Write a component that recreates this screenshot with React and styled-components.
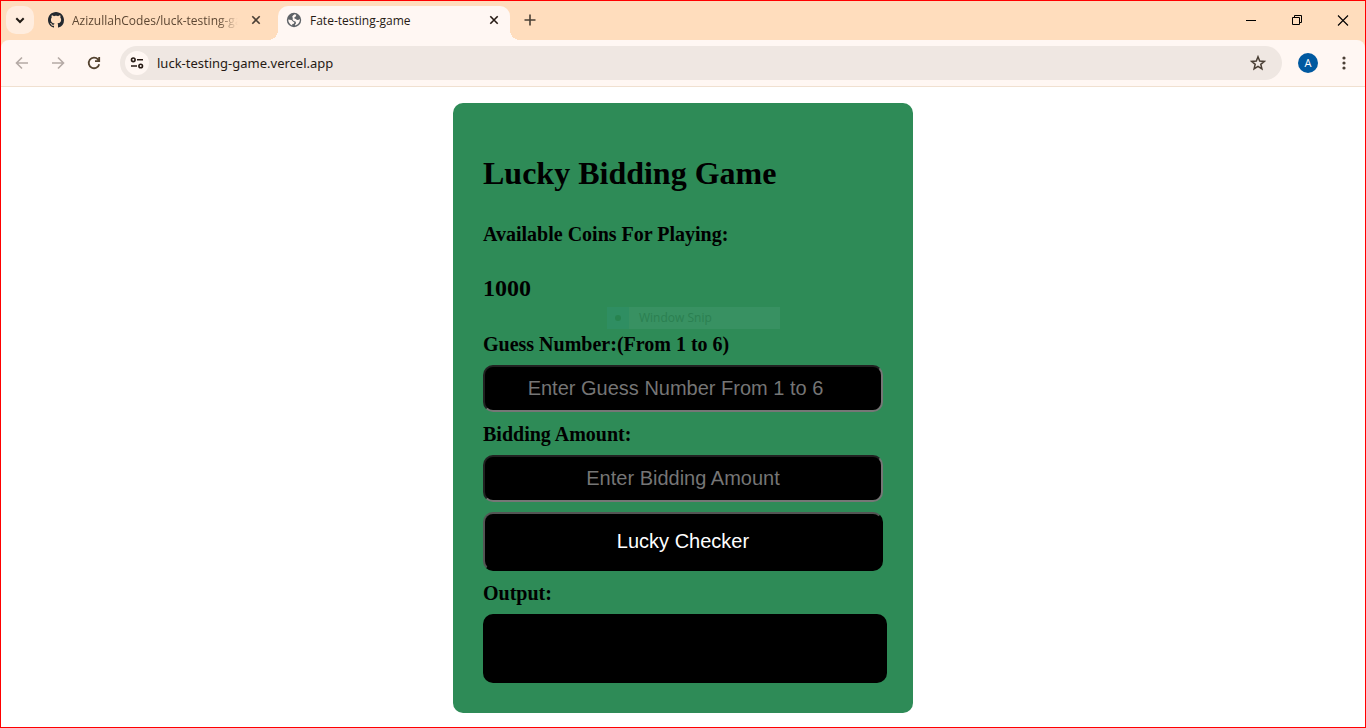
import React from "react";
import styled, { createGlobalStyle } from "styled-components";

const GlobalStyle = createGlobalStyle`
  * { box-sizing: border-box; }
  body { margin: 0; background: #fff; }
  button { font: inherit; color: inherit; cursor: pointer; }
`;

const uiFont = `"Open Sans", "Noto Sans", sans-serif`;

const Window = styled.div`
  min-height: 100vh;
  border: 1px solid #f00;
  background: #fff;
`;

const TabStrip = styled.header`
  display: flex;
  height: 39px;
  padding: 5px 0 0 5px;
  background: #ffddbd;
  font: 12px/16px ${uiFont};
`;

const IconButton = styled.button`
  display: flex;
  align-items: center;
  justify-content: center;
  flex: none;
  width: ${(p) => p.$w || 28}px;
  height: ${(p) => p.$h || 28}px;
  padding: 0;
  border: 0;
  border-radius: ${(p) => p.$radius || 0}px;
  background: ${(p) => p.$bg || "transparent"};
  color: ${(p) => p.$color || "#4a3f35"};
`;

const Tab = styled.div`
  position: relative;
  display: flex;
  align-items: center;
  width: 232px;
  height: 34px;
  padding: 0 6px 6px 8px;
  border-radius: 10px 10px 0 0;
  background: ${(p) => (p.$active ? "#fff7f3" : "transparent")};
  color: ${(p) => (p.$active ? "#261a14" : "#5d4733")};

  &::before,
  &::after {
    content: "";
    display: ${(p) => (p.$active ? "block" : "none")};
    position: absolute;
    bottom: 0;
    width: 10px;
    height: 10px;
  }
  &::before {
    left: -10px;
    background: radial-gradient(circle at 0 0, transparent 10px, #fff7f3 10px);
  }
  &::after {
    right: -10px;
    background: radial-gradient(circle at 100% 0, transparent 10px, #fff7f3 10px);
  }
`;

const InactiveTab = styled(Tab)`
  width: 244px;
  padding-left: 14px;
  padding-right: 12px;
`;

const TabTitle = styled.button`
  flex: 1;
  min-width: 0;
  margin: 0 8px;
  padding: 2px 0 0;
  border: 0;
  background: none;
  text-align: left;
  white-space: nowrap;
  overflow: hidden;
  mask-image: ${(p) =>
    p.$fade ? "linear-gradient(to right, #000 88%, transparent)" : "none"};
`;

const WindowControls = styled.div`
  display: flex;
  margin: -5px 0 0 auto;
`;

const ToolbarBack = styled.div`
  background: #ffddbd;
`;

const Toolbar = styled.nav`
  display: flex;
  align-items: center;
  height: 47px;
  padding: 0 3px;
  border-bottom: 1px solid #f0e0d0;
  border-radius: 8px 8px 0 0;
  background: #fff7f3;
`;

const NavButton = styled(IconButton)`
  width: 36px;
  height: 36px;
`;

const AddressBar = styled.div`
  display: flex;
  flex: 1;
  align-items: center;
  height: 34px;
  margin: 0 8px;
  padding: 0 10px 0 5px;
  border-radius: 17px;
  background: #efe7e2;
`;

const Address = styled.input`
  flex: 1;
  min-width: 0;
  padding: 0;
  margin-left: 8px;
  border: 0;
  outline: 0;
  background: transparent;
  color: #261a14;
  font: 13px/20px "Noto Sans", "Open Sans", sans-serif;
`;

const Avatar = styled.button`
  width: 20px;
  height: 20px;
  margin: 0 8px;
  padding: 0;
  border: 0;
  border-radius: 50%;
  background: #0059a0;
  color: #fff;
  font: 11px/20px ${uiFont};
`;

const Page = styled.main`
  display: flex;
  justify-content: center;
  padding: 16px 16px 14px;
`;

const Card = styled.form`
  position: relative;
  display: flex;
  flex-direction: column;
  gap: 10px;
  width: 460px;
  padding: 31px 30px 30px;
  border-radius: 10px;
  background: #2e8b57;
  color: #000;
  font-family: "Liberation Serif", "Times New Roman", serif;
`;

const Title = styled.h1`
  margin: 21px 0;
  font-size: 32px;
  line-height: 37px;
`;

const Subtitle = styled.h3`
  margin: 0;
  font-size: 20px;
  line-height: 23px;
`;

const Coins = styled.h2`
  margin: 19px 0 20px;
  font-size: 24px;
  line-height: 27px;
`;

const FieldLabel = styled.label`
  margin: 1px 0 -1px;
  font-size: 20px;
  font-weight: bold;
  line-height: 23px;
`;

const Field = styled.input`
  width: 100%;
  height: 47px;
  padding: 10px;
  border: 2px inset #767676;
  border-radius: 10px;
  background: #000;
  color: #fff;
  font: 20px/23px "Liberation Sans", Arial, sans-serif;
  text-align: center;

  &::placeholder {
    color: #757575;
  }
`;

const CheckButton = styled.button`
  height: 59px;
  padding: 0;
  border: 2px outset #000;
  border-radius: 10px;
  background: #000;
  color: #fff;
  font: 20px/23px "Liberation Sans", Arial, sans-serif;
`;

const Output = styled.output`
  width: calc(100% + 4px);
  height: 69px;
  border-radius: 10px;
  background: #000;
  color: #fff;
`;

const SnipHint = styled.div`
  position: absolute;
  top: 204px;
  left: 154px;
  display: flex;
  align-items: center;
  width: 173px;
  height: 22px;
  background: #389162;
  color: #2b8051;
  font: 12px/16px ${uiFont};
  pointer-events: none;
`;

const SnipMark = styled.span`
  display: flex;
  align-items: center;
  justify-content: center;
  width: 22px;
  height: 22px;
  margin-right: 10px;
  background: #2f8e62;

  &::before {
    content: "";
    width: 6px;
    height: 6px;
    border-radius: 50%;
    background: #27834f;
  }
`;

const Icon = ({ size = 16, children, ...rest }) => (
  <svg
    width={size}
    height={size}
    viewBox={`0 0 ${size} ${size}`}
    fill="none"
    stroke="currentColor"
    strokeWidth="1.6"
    aria-hidden="true"
    {...rest}
  >
    {children}
  </svg>
);

const CloseIcon = () => (
  <Icon>
    <path d="M4.3 4.3l7.4 7.4M11.7 4.3l-7.4 7.4" />
  </Icon>
);

const GithubIcon = () => (
  <Icon fill="#24292f" stroke="none">
    <path d="M8 0C3.58 0 0 3.58 0 8c0 3.54 2.29 6.53 5.47 7.59.4.07.55-.17.55-.38 0-.19-.01-.82-.01-1.49-2.01.37-2.53-.49-2.69-.94-.09-.23-.48-.94-.82-1.13-.28-.15-.68-.52-.01-.53.63-.01 1.08.58 1.23.82.72 1.21 1.87.87 2.33.66.07-.52.28-.87.51-1.07-1.78-.2-3.64-.89-3.64-3.95 0-.87.31-1.59.82-2.15-.08-.2-.36-1.02.08-2.12 0 0 .67-.21 2.2.82.64-.18 1.32-.27 2-.27s1.36.09 2 .27c1.53-1.04 2.2-.82 2.2-.82.44 1.1.16 1.92.08 2.12.51.56.82 1.27.82 2.15 0 3.07-1.87 3.75-3.65 3.95.29.25.54.73.54 1.48 0 1.07-.01 1.93-.01 2.2 0 .21.15.46.55.38A8.01 8.01 0 0 0 16 8c0-4.42-3.58-8-8-8z" />
  </Icon>
);

const GlobeIcon = () => (
  <Icon stroke="none">
    <circle cx="8" cy="8" r="7.2" fill="#5f6368" />
    <path
      fill="#fff7f3"
      d="M8.600 2.300l1.600.4-.2 1.500-1.700 1.200.2 1.200 1.400.4 1.100 1.100 1.900-.3 1-.8c.2 3-1.700 5.700-4.600 6.500l-.5-.6 1.200-1.600-.3-1.600-2.300-.9-.8-1.200.2-1.600-.6-1.300.8-1.200zM2.200 7.600l3.300.4 1.500 1.600 1.400.8-.6 1.300-1.500.4-.1 1.300c-2.400-.8-4-3.100-4-5.800z"
    />
  </Icon>
);

export default function App() {
  return (
    <Window>
      <GlobalStyle />
      <TabStrip>
        <IconButton $bg="#ffeddf" $radius={10} $color="#211a14" aria-label="Search tabs">
          <Icon strokeWidth="2">
            <path d="M4.300 6.300L8 10l3.700-3.700" />
          </Icon>
        </IconButton>
        <InactiveTab>
          <GithubIcon />
          <TabTitle type="button" $fade>
            AzizullahCodes/luck-testing-ga
          </TabTitle>
          <IconButton $w={20} $h={20} aria-label="Close tab">
            <CloseIcon />
          </IconButton>
        </InactiveTab>
        <Tab $active>
          <GlobeIcon />
          <TabTitle type="button">Fate-testing-game</TabTitle>
          <IconButton $w={20} $h={20} $color="#261a14" aria-label="Close tab">
            <CloseIcon />
          </IconButton>
        </Tab>
        <IconButton $w={40} aria-label="New tab">
          <Icon>
            <path d="M8 2.500v11M2.500 8h11" />
          </Icon>
        </IconButton>
        <WindowControls>
          <IconButton $w={46} $h={38} $color="#000" aria-label="Minimize">
            <Icon strokeWidth="1">
              <path d="M4 8.500h10" />
            </Icon>
          </IconButton>
          <IconButton $w={46} $h={38} $color="#000" aria-label="Restore">
            <Icon strokeWidth="1">
              <path d="M4.500 5.500h7v7h-7zM6.500 5.500v-2h7v7h-2" />
            </Icon>
          </IconButton>
          <IconButton $w={46} $h={38} $color="#000" aria-label="Close window">
            <Icon strokeWidth="1.100">
              <path d="M4 3.500l10 10M14 3.500l-10 10" />
            </Icon>
          </IconButton>
        </WindowControls>
      </TabStrip>

      <ToolbarBack>
        <Toolbar>
          <NavButton $color="#b5aaa5" aria-label="Back">
            <Icon>
              <path d="M14 8H3M8 2.500L2.500 8 8 13.500" />
            </Icon>
          </NavButton>
          <NavButton $color="#b5aaa5" aria-label="Forward">
            <Icon>
              <path d="M2 8h11M8 2.500L13.500 8 8 13.500" />
            </Icon>
          </NavButton>
          <NavButton $color="#54432f" aria-label="Reload">
            <Icon strokeWidth="1.800">
              <path d="M13.200 9.200A5.300 5.300 0 1 1 12 4.400l1 1.200M13.200 2v4.200H9" />
            </Icon>
          </NavButton>
          <AddressBar>
            <IconButton
              $w={24}
              $h={24}
              $radius={12}
              $bg="#fff7f3"
              $color="#261a14"
              aria-label="Site information"
            >
              <Icon>
                <circle cx="4.300" cy="4.800" r="1.800" />
                <circle cx="11.700" cy="11" r="1.800" />
                <path d="M8 4.800h6M2 11h6" />
              </Icon>
            </IconButton>
            <Address aria-label="Address" defaultValue="luck-testing-game.vercel.app" />
            <IconButton aria-label="Bookmark this page">
              <Icon strokeWidth="1.500">
                <path d="M8 1.800l1.700 4.300 4.600.3-3.500 2.900 1.100 4.500L8 11.300l-3.900 2.500 1.100-4.500-3.500-2.900 4.600-.3z" />
              </Icon>
            </IconButton>
          </AddressBar>
          <Avatar aria-label="Profile">A</Avatar>
          <NavButton aria-label="Menu">
            <Icon fill="currentColor" stroke="none">
              <circle cx="8" cy="3" r="1.600" />
              <circle cx="8" cy="8" r="1.600" />
              <circle cx="8" cy="13" r="1.600" />
            </Icon>
          </NavButton>
        </Toolbar>
      </ToolbarBack>

      <Page>
        <Card onSubmit={(e) => e.preventDefault()}>
          <Title>Lucky Bidding Game</Title>
          <Subtitle>Available Coins For Playing:</Subtitle>
          <Coins>1000</Coins>
          <FieldLabel htmlFor="guess">Guess Number:(From 1 to 6)</FieldLabel>
          <Field id="guess" type="number" placeholder="Enter Guess Number From 1 to 6" />
          <FieldLabel htmlFor="bid">Bidding Amount:</FieldLabel>
          <Field id="bid" type="text" placeholder="Enter Bidding Amount" />
          <CheckButton type="submit">Lucky Checker</CheckButton>
          <FieldLabel htmlFor="result">Output:</FieldLabel>
          <Output id="result" />
          <SnipHint>
            <SnipMark />
            Window Snip
          </SnipHint>
        </Card>
      </Page>
    </Window>
  );
}
